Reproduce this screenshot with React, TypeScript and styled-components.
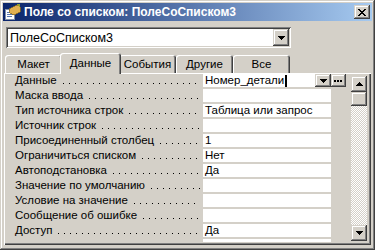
import React from "react";
import styled, { createGlobalStyle } from "styled-components";

const GlobalStyle = createGlobalStyle`
  html, body { margin: 0; padding: 0; background: #d4d0c8; }
  body { font-family: "Liberation Sans", Arial, sans-serif; font-size: 11.5px; color: #000; }
  * { box-sizing: border-box; }
`;

const raised = `box-shadow: inset -1px -1px #404040, inset 1px 1px #d4d0c8, inset -2px -2px #808080, inset 2px 2px #ffffff;`;
const sunken = `box-shadow: inset 1px 1px #808080, inset -1px -1px #ffffff, inset 2px 2px #404040, inset -2px -2px #d4d0c8;`;

const Window = styled.div`
  width: 375px;
  height: 250px;
  background: #d4d0c8;
  padding: 3px;
  display: flex;
  flex-direction: column;
  ${raised}
`;

const TitleBar = styled.div`
  height: 18px;
  flex: none;
  display: flex;
  align-items: center;
  padding: 0 2px;
  background: linear-gradient(to right, #0a246a, #a6caf0);
  color: #fff;
  font-weight: bold;
  font-size: 12px;
`;

const TitleText = styled.span`
  margin-left: 3px;
  white-space: nowrap;
`;

const CloseButton = styled.div`
  margin-left: auto;
  width: 16px;
  height: 14px;
  background: #d4d0c8;
  display: flex;
  align-items: center;
  justify-content: center;
  ${raised}
`;

const Body = styled.div`
  flex: 1;
  display: flex;
  flex-direction: column;
  padding: 6px 1px 2px 1px;
  min-height: 0;
`;

const Combo = styled.div`
  margin-left: 2px;
  width: 285px;
  height: 21px;
  flex: none;
  background: #fff;
  display: flex;
  align-items: center;
  padding: 2px;
  ${sunken}
`;

const ComboText = styled.span`
  padding-left: 2px;
  flex: 1;
  font-size: 12.5px;
`;

const ArrowButton = styled.div<{ $w: number; $h: number }>`
  width: ${(p) => p.$w}px;
  height: ${(p) => p.$h}px;
  flex: none;
  background: #d4d0c8;
  display: flex;
  align-items: center;
  justify-content: center;
  ${raised}
`;

const TabStrip = styled.div`
  margin-top: 5px;
  height: 20px;
  flex: none;
  display: flex;
  align-items: flex-end;
  padding-left: 1px;
  position: relative;
  z-index: 1;
`;

const Tab = styled.div<{ $active?: boolean }>`
  width: ${(p) => (p.$active ? 61 : 57)}px;
  height: ${(p) => (p.$active ? 21 : 18)}px;
  margin: ${(p) => (p.$active ? "0 -2px -1px -2px" : "0")};
  position: relative;
  z-index: ${(p) => (p.$active ? 2 : 1)};
  background: #d4d0c8;
  border-radius: 3px 3px 0 0;
  display: flex;
  align-items: center;
  justify-content: center;
  padding-bottom: ${(p) => (p.$active ? 2 : 0)}px;
  box-shadow: inset 1px 1px #ffffff, inset -1px 0 #404040, inset -2px 0 #808080;
`;

const Panel = styled.div`
  flex: 1;
  min-height: 0;
  display: flex;
  padding: 1px 4px 0 2px;
  background: #d4d0c8;
  box-shadow: inset 1px 1px #ffffff, inset -1px -1px #404040, inset -2px -2px #808080;
`;

const Grid = styled.div`
  display: flex;
  flex-direction: column;
  gap: 2px;
  overflow: hidden;
  height: 168px;
`;

const Row = styled.div`
  display: flex;
  height: 13px;
  flex: none;
`;

const Label = styled.div`
  width: 194px;
  margin-right: 3px;
  padding-left: 9px;
  white-space: nowrap;
  line-height: 13px;
  display: flex;
`;

const Leader = styled.span`
  flex: 1;
  height: 1px;
  align-self: flex-end;
  margin: 0 0 3px 6px;
  background-image: linear-gradient(to right, #000 1px, transparent 1px);
  background-size: 6px 1px;
  background-repeat: repeat-x;
`;

const Value = styled.div`
  width: 128px;
  background: #fff;
  padding-left: 2px;
  line-height: 13px;
  display: flex;
  align-items: center;
  white-space: nowrap;
  overflow: hidden;
`;

const ValueText = styled.span`
  display: flex;
  align-items: center;
  flex: 1;
`;

const Caret = styled.span`
  width: 2px;
  height: 12px;
  background: #000;
  margin-left: 1px;
`;

const Scrollbar = styled.div`
  margin-left: auto;
  margin-top: 2px;
  width: 16px;
  height: 165px;
  flex: none;
  display: flex;
  flex-direction: column;
`;

const Thumb = styled.div`
  height: 14px;
  flex: none;
  background: #d4d0c8;
  ${raised}
`;

const Track = styled.div`
  flex: 1;
  background: repeating-conic-gradient(#ffffff 0 25%, #d4d0c8 0 50%) 0 0 / 2px 2px;
`;

const DownArrow = () => (
  <svg width="7" height="4" viewBox="0 0 7 4" shapeRendering="crispEdges">
    <path d="M0 0h7v1h-1v1h-1v1h-1v1h-1v-1h-1v-1h-1v-1h-1z" fill="#000" />
  </svg>
);

const UpArrow = () => (
  <svg width="7" height="4" viewBox="0 0 7 4" shapeRendering="crispEdges">
    <path d="M0 4h7v-1h-1v-1h-1v-1h-1v-1h-1v1h-1v1h-1v1h-1z" fill="#000" />
  </svg>
);

const Dots = () => (
  <svg width="9" height="2" viewBox="0 0 9 2" shapeRendering="crispEdges">
    <rect x="0" y="0" width="2" height="2" fill="#000" />
    <rect x="3" y="0" width="2" height="2" fill="#000" />
    <rect x="6" y="0" width="2" height="2" fill="#000" />
  </svg>
);

const CloseGlyph = () => {
  const rects = [];
  for (let i = 0; i < 7; i++) {
    rects.push(<rect key={"a" + i} x={i} y={i} width="2" height="1" fill="#000" />);
    rects.push(<rect key={"b" + i} x={6 - i} y={i} width="2" height="1" fill="#000" />);
  }
  return (
    <svg width="8" height="7" viewBox="0 0 8 7" shapeRendering="crispEdges">
      {rects}
    </svg>
  );
};

const AppIcon = () => (
  <svg width="16" height="16" viewBox="0 0 16 16" shapeRendering="crispEdges">
    <rect x="0.5" y="5.5" width="9" height="10" fill="#ffffff" stroke="#7f8fa8" />
    <rect x="2" y="8" width="6" height="1" fill="#5a78b0" />
    <rect x="2" y="10" width="6" height="1" fill="#5a78b0" />
    <rect x="2" y="12" width="5" height="1" fill="#5a78b0" />
    <polygon points="4,5 12,1 15,3 15,8 9,11 5,9" fill="#e0b050" stroke="#8a6a20" strokeWidth="0.8" />
    <polygon points="12,0 15,0 15,3 13,2" fill="#90a030" />
  </svg>
);

const rows: { label: string; value: string }[] = [
  { label: "Данные", value: "Номер_детали" },
  { label: "Маска ввода", value: "" },
  { label: "Тип источника строк", value: "Таблица или запрос" },
  { label: "Источник строк", value: "" },
  { label: "Присоединенный столбец", value: "1" },
  { label: "Ограничиться списком", value: "Нет" },
  { label: "Автоподстановка", value: "Да" },
  { label: "Значение по умолчанию", value: "" },
  { label: "Условие на значение", value: "" },
  { label: "Сообщение об ошибке", value: "" },
  { label: "Доступ", value: "Да" },
  { label: "", value: "" },
];

const tabs = ["Макет", "Данные", "События", "Другие", "Все"];

export default function App() {
  return (
    <>
      <GlobalStyle />
      <Window>
        <TitleBar>
          <AppIcon />
          <TitleText>Поле со списком: ПолеСоСписком3</TitleText>
          <CloseButton>
            <CloseGlyph />
          </CloseButton>
        </TitleBar>
        <Body>
          <Combo>
            <ComboText>ПолеСоСписком3</ComboText>
            <ArrowButton $w={16} $h={17}>
              <DownArrow />
            </ArrowButton>
          </Combo>
          <TabStrip>
            {tabs.map((t) => (
              <Tab key={t} $active={t === "Данные"}>
                {t}
              </Tab>
            ))}
          </TabStrip>
          <Panel>
            <Grid>
              {rows.map((r, i) => (
                <Row key={i}>
                  <Label>
                    {r.label}
                    {r.label && <Leader />}
                  </Label>
                  <Value>
                    {i === 0 ? (
                      <>
                        <ValueText>
                          {r.value}
                          <Caret />
                        </ValueText>
                        <ArrowButton $w={16} $h={13}>
                          <DownArrow />
                        </ArrowButton>
                      </>
                    ) : (
                      r.value
                    )}
                  </Value>
                  {i === 0 && (
                    <ArrowButton $w={15} $h={13}>
                      <Dots />
                    </ArrowButton>
                  )}
                </Row>
              ))}
            </Grid>
            <Scrollbar>
              <ArrowButton $w={16} $h={16}>
                <UpArrow />
              </ArrowButton>
              <Thumb />
              <Track />
              <ArrowButton $w={16} $h={16}>
                <DownArrow />
              </ArrowButton>
            </Scrollbar>
          </Panel>
        </Body>
      </Window>
    </>
  );
}
